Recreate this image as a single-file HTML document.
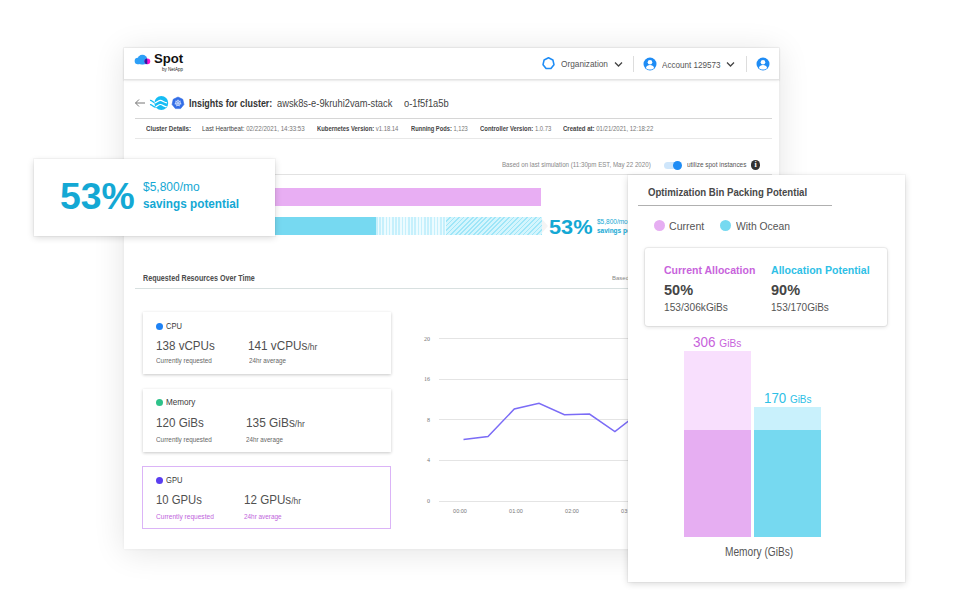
<!DOCTYPE html>
<html><head><meta charset="utf-8">
<style>
*{margin:0;padding:0;box-sizing:border-box}
html,body{width:960px;height:593px;overflow:hidden;background:#fff}
body{position:relative;font-family:"Liberation Sans",sans-serif;color:#333}
.a{position:absolute}
.t{position:absolute;white-space:nowrap;line-height:1}
.main{left:124px;top:48px;width:655px;height:501px;background:#fff;box-shadow:0 0 3px rgba(0,0,0,0.06),0 3px 30px rgba(0,0,0,0.11)}
.hdr{left:124px;top:48px;width:655px;height:32px;background:#fff;border-bottom:1px solid #e4e4e4;box-shadow:0 0 0 1px rgba(0,0,0,0.03),0 1px 3px rgba(0,0,0,0.06)}
.line{position:absolute;height:1px;background:#dcdcdc}
.card{position:absolute;background:#fff;box-shadow:0 1px 3px rgba(0,0,0,0.22)}
.ovl{position:absolute;background:#fff;box-shadow:0 0 0 1px rgba(0,0,0,0.03),0 1.5px 7px rgba(0,0,0,0.16)}
</style></head><body>

<!-- MAIN PANEL -->
<div class="a main"></div>
<div class="a hdr"></div>

<!-- logo -->
<svg class="a" style="left:130px;top:50px" width="24" height="18" viewBox="130 50 24 18">
  <defs><clipPath id="cc"><circle cx="142.4" cy="59.7" r="4.9"/><rect x="137" y="59.7" width="10.3" height="4.4"/></clipPath></defs>
  <g fill="#2d9ff7">
    <circle cx="137.9" cy="60.9" r="3.25"/>
    <circle cx="142.4" cy="59.7" r="4.9"/>
    <rect x="137.6" y="59.5" width="9.7" height="4.65"/>
  </g>
  <circle cx="147.4" cy="61.3" r="2.85" fill="#ff10cf"/>
  <circle cx="147.4" cy="61.3" r="2.85" fill="#2b1e9e" clip-path="url(#cc)"/>
</svg>
<div class="t" style="left:154px;top:53px;font-size:12.5px;font-weight:bold;color:#111;transform:scaleX(1.05);transform-origin:0 0">Spot</div>
<div class="t" style="left:162px;top:67.6px;font-size:4.5px;color:#222;transform:scaleX(1.0);transform-origin:0 0">by NetApp</div>

<!-- header right -->
<svg class="a" style="left:540px;top:55px" width="17" height="17" viewBox="540 55 17 17"><polygon points="548.50,57.80 552.88,59.91 553.96,64.65 550.93,68.45 546.07,68.45 543.04,64.65 544.12,59.91" fill="none" stroke="#1e8cf5" stroke-width="1.6" stroke-linejoin="round"/></svg>
<div class="t" style="left:561px;top:60px;font-size:9px;color:#555;transform:scaleX(0.92);transform-origin:0 0">Organization</div>
<svg class="a" style="left:614px;top:60px" width="9" height="8" viewBox="0 0 9 8"><path d="M1 2.5 L4.5 6 L8 2.5" fill="none" stroke="#444" stroke-width="1.3"/></svg>
<div class="a" style="left:633px;top:56px;width:1px;height:16px;background:#ddd"></div>
<svg class="a" style="left:643px;top:57px" width="14" height="14" viewBox="0 0 14 14">
  <circle cx="7" cy="7" r="6.5" fill="#1e8cf5"/>
  <circle cx="7" cy="5.2" r="2.3" fill="#fff"/>
  <path d="M2.9 11 C3.5 8.7 5 8 7 8 C9 8 10.5 8.7 11.1 11 C10 12.1 8.6 12.6 7 12.6 C5.4 12.6 4 12.1 2.9 11Z" fill="#fff"/>
</svg>
<div class="t" style="left:662px;top:60.5px;font-size:9px;color:#555;transform:scaleX(0.9);transform-origin:0 0">Account 129573</div>
<svg class="a" style="left:726px;top:60px" width="9" height="8" viewBox="0 0 9 8"><path d="M1 2.5 L4.5 6 L8 2.5" fill="none" stroke="#444" stroke-width="1.3"/></svg>
<div class="a" style="left:746px;top:56px;width:1px;height:16px;background:#ddd"></div>
<svg class="a" style="left:756px;top:57px" width="14" height="14" viewBox="0 0 14 14">
  <circle cx="7" cy="7" r="6.5" fill="#1e8cf5"/>
  <circle cx="7" cy="5.2" r="2.3" fill="#fff"/>
  <path d="M2.9 11 C3.5 8.7 5 8 7 8 C9 8 10.5 8.7 11.1 11 C10 12.1 8.6 12.6 7 12.6 C5.4 12.6 4 12.1 2.9 11Z" fill="#fff"/>
</svg>

<!-- insights row -->
<svg class="a" style="left:134px;top:98px" width="12" height="10" viewBox="0 0 12 10"><path d="M11 5 H1.5 M5 1.5 L1.5 5 L5 8.5" fill="none" stroke="#777" stroke-width="1"/></svg>
<svg class="a" style="left:148px;top:94px" width="22" height="18" viewBox="148 94 22 18">
  <defs><clipPath id="oc"><circle cx="161.3" cy="103" r="6.9"/></clipPath></defs>
  <path d="M150 100.4 C152 100 153 102.9 155 102.8 C157 102.6 158.5 100.1 160.5 100.3 C162.5 100.5 164.5 102.8 167 102.8 M150 104.6 C152 104.2 153 107.1 155 107 C157 106.8 158.5 104.3 160.5 104.5 C162.5 104.7 164.5 107 167 107" fill="none" stroke="#16bdf4" stroke-width="1.3"/>
  <circle cx="161.3" cy="103" r="6.9" fill="#16bdf4"/>
  <path d="M150 100.4 C152 100 153 102.9 155 102.8 C157 102.6 158.5 100.1 160.5 100.3 C162.5 100.5 164.5 102.8 167 102.8 M150 104.6 C152 104.2 153 107.1 155 107 C157 106.8 158.5 104.3 160.5 104.5 C162.5 104.7 164.5 107 167 107" fill="none" stroke="#fff" stroke-width="1.2" clip-path="url(#oc)"/>
</svg>
<svg class="a" style="left:171px;top:96px" width="14" height="14" viewBox="171 96 14 14">
  <polygon points="178.00,97.00 182.77,99.30 183.95,104.46 180.65,108.60 175.35,108.60 172.05,104.46 173.23,99.30" fill="#326de6" stroke="#326de6" stroke-width="0.6" stroke-linejoin="round"/>
  <circle cx="178" cy="103.1" r="2.4" fill="none" stroke="#e6eeff" stroke-width="0.8"/>
  <path d="M178.00 103.10 L178.00 99.50 M178.00 103.10 L180.81 100.86 M178.00 103.10 L181.51 103.90 M178.00 103.10 L179.56 106.34 M178.00 103.10 L176.44 106.34 M178.00 103.10 L174.49 103.90 M178.00 103.10 L175.19 100.86" stroke="#e6eeff" stroke-width="0.6"/>
</svg>
<div class="t" style="left:189px;top:98px;font-size:10.5px;font-weight:bold;color:#333;transform:scaleX(0.85);transform-origin:0 0">Insights for cluster:</div>
<div class="t" style="left:277px;top:98px;font-size:10.5px;color:#444;transform:scaleX(0.886);transform-origin:0 0">awsk8s-e-9kruhi2vam-stack</div>
<div class="t" style="left:404px;top:98px;font-size:10.5px;color:#444;transform:scaleX(0.89);transform-origin:0 0">o-1f5f1a5b</div>

<div class="line" style="left:135px;top:118px;width:637px;background:#d6d6d6"></div>
<div class="line" style="left:135px;top:138px;width:637px;background:#e8e8e8"></div>
<div class="t" style="left:146px;top:124.5px;font-size:7px;font-weight:bold;color:#444;transform:scaleX(0.877);transform-origin:0 0">Cluster Details:</div>
<div class="t" style="left:202px;top:124.5px;font-size:7px;color:#777;transform:scaleX(0.886);transform-origin:0 0"><span style="color:#444">Last Heartbeat:</span> 02/22/2021, 14:33:53</div>
<div class="t" style="left:317px;top:124.5px;font-size:7px;color:#777;transform:scaleX(0.84);transform-origin:0 0"><b style="color:#444">Kubernetes Version:</b> v1.18.14</div>
<div class="t" style="left:411px;top:124.5px;font-size:7px;color:#777;transform:scaleX(0.82);transform-origin:0 0"><b style="color:#444">Running Pods:</b> 1,123</div>
<div class="t" style="left:480px;top:124.5px;font-size:7px;color:#777;transform:scaleX(0.845);transform-origin:0 0"><b style="color:#444">Controller Version:</b> 1.0.73</div>
<div class="t" style="left:563px;top:124.5px;font-size:7px;color:#777;transform:scaleX(0.862);transform-origin:0 0"><b style="color:#444">Created at:</b> 01/21/2021, 12:18:22</div>

<!-- savings section -->
<div class="t" style="left:502px;top:161.5px;font-size:6.3px;color:#888;transform:scaleX(0.982);transform-origin:0 0">Based on last simulation (11:30pm EST, May 22 2020)</div>
<div class="a" style="left:664px;top:161.5px;width:17px;height:7px;border-radius:4px;background:#cfe6fb"></div>
<div class="a" style="left:673px;top:160.5px;width:9.4px;height:9.4px;border-radius:50%;background:#1e8cf5"></div>
<div class="t" style="left:687px;top:161px;font-size:7px;color:#555;transform:scaleX(0.92);transform-origin:0 0">utilize spot instances</div>
<div class="a" style="left:750.8px;top:160.3px;width:9.6px;height:9.6px;border-radius:50%;background:#333;color:#fff;font-family:'Liberation Serif',serif;font-size:8px;font-weight:bold;text-align:center;line-height:9.6px">i</div>
<div class="line" style="left:135px;top:174px;width:637px;background:#e2e2e2"></div>

<div class="a" style="left:150px;top:188px;width:391px;height:18px;background:#e8aef3"></div>
<div class="a" style="left:150px;top:217px;width:226px;height:18px;background:#76d9f1"></div>
<div class="a" style="left:376px;top:217px;width:70px;height:18px;background:repeating-linear-gradient(90deg,#c6f0fc 0 1.6px,#ecfbff 1.6px 3.2px)"></div>
<div class="a" style="left:446px;top:217px;width:96px;height:18px;background:repeating-linear-gradient(-45deg,#9fe6f8 0 1.2px,#d4f5fd 1.2px 3.2px)"></div>
<svg class="a" style="left:542px;top:219px" width="8" height="14" viewBox="0 0 8 14"><path d="M0 0 L6 7 L0 14Z" fill="#f4f4f4"/></svg>
<div class="t" style="left:549px;top:217px;font-size:20px;font-weight:bold;color:#14a8d4;transform:scaleX(1.087);transform-origin:0 0">53%</div>
<div class="t" style="left:597px;top:219px;font-size:6.5px;color:#14a8d4">$5,800/mo</div>
<div class="t" style="left:597px;top:228px;font-size:6.5px;font-weight:bold;color:#14a8d4">savings potential</div>

<!-- requested resources -->
<div class="t" style="left:143px;top:274px;font-size:8.5px;font-weight:bold;color:#4c4c4c;transform:scaleX(0.84);transform-origin:0 0">Requested Resources Over Time</div>
<div class="t" style="left:612px;top:275px;font-size:6px;color:#888">Based on last simulation</div>
<div class="line" style="left:135px;top:288px;width:637px;background:#d8e0e0"></div>

<!-- CPU card -->
<div class="card" style="left:143px;top:312px;width:248px;height:62px"></div>
<div class="a" style="left:156px;top:323px;width:7px;height:7px;border-radius:50%;background:#1e82f5"></div>
<div class="t" style="left:166px;top:322px;font-size:8.5px;color:#3a3a3a;transform:scaleX(0.89);transform-origin:0 0">CPU</div>
<div class="t" style="left:156px;top:340px;font-size:12.5px;color:#505050;transform:scaleX(0.93);transform-origin:0 0">138 vCPUs</div>
<div class="t" style="left:248px;top:340px;font-size:12.5px;color:#505050;transform:scaleX(0.94);transform-origin:0 0">141 vCPUs<span style="font-size:9px">/hr</span></div>
<div class="t" style="left:156px;top:358.3px;font-size:6.4px;color:#666;transform:scaleX(0.995);transform-origin:0 0">Currently requested</div>
<div class="t" style="left:249px;top:358.3px;font-size:6.4px;color:#666;transform:scaleX(0.98);transform-origin:0 0">24hr average</div>

<!-- Memory card -->
<div class="card" style="left:143px;top:389px;width:248px;height:63px"></div>
<div class="a" style="left:156px;top:399px;width:7px;height:7px;border-radius:50%;background:#2ec28a"></div>
<div class="t" style="left:166px;top:398px;font-size:8.5px;color:#3a3a3a;transform:scaleX(0.955);transform-origin:0 0">Memory</div>
<div class="t" style="left:156px;top:417px;font-size:12.5px;color:#505050;transform:scaleX(0.93);transform-origin:0 0">120 GiBs</div>
<div class="t" style="left:246px;top:417px;font-size:12.5px;color:#505050;transform:scaleX(0.95);transform-origin:0 0">135 GiBs<span style="font-size:9px">/hr</span></div>
<div class="t" style="left:156px;top:437.3px;font-size:6.4px;color:#666;transform:scaleX(0.995);transform-origin:0 0">Currently requested</div>
<div class="t" style="left:246px;top:437.3px;font-size:6.4px;color:#666;transform:scaleX(0.98);transform-origin:0 0">24hr average</div>

<!-- GPU card -->
<div class="a" style="left:142px;top:466px;width:249px;height:63px;border:1px solid #dbb4f7;background:#fff"></div>
<div class="a" style="left:156px;top:477px;width:7px;height:7px;border-radius:50%;background:#5a3ef0"></div>
<div class="t" style="left:166px;top:476px;font-size:8.5px;color:#3a3a3a;transform:scaleX(0.89);transform-origin:0 0">GPU</div>
<div class="t" style="left:156px;top:494px;font-size:12.5px;color:#505050;transform:scaleX(0.905);transform-origin:0 0">10 GPUs</div>
<div class="t" style="left:244px;top:494px;font-size:12.5px;color:#505050;transform:scaleX(0.93);transform-origin:0 0">12 GPUs<span style="font-size:9px">/hr</span></div>
<div class="t" style="left:156px;top:514.3px;font-size:6.4px;color:#c065dc;transform:scaleX(1.03);transform-origin:0 0">Currently requested</div>
<div class="t" style="left:244px;top:514.3px;font-size:6.4px;color:#c065dc;transform:scaleX(1.0);transform-origin:0 0">24hr average</div>

<!-- chart -->
<svg class="a" style="left:400px;top:320px" width="240" height="210" viewBox="400 320 240 210">
  <g stroke="#e4e4e4" stroke-width="1">
    <line x1="439" y1="338.5" x2="640" y2="338.5"/>
    <line x1="439" y1="379.5" x2="640" y2="379.5"/>
    <line x1="439" y1="419.5" x2="640" y2="419.5"/>
    <line x1="439" y1="460.5" x2="640" y2="460.5"/>
    <line x1="439" y1="501.5" x2="640" y2="501.5"/>
  </g>
  <g font-family="Liberation Serif" font-size="6" fill="#777" text-anchor="end">
    <text x="430" y="340.5">20</text>
    <text x="430" y="381">16</text>
    <text x="430" y="421.5">8</text>
    <text x="430" y="462">4</text>
    <text x="430" y="503">0</text>
  </g>
  <g font-family="Liberation Sans" font-size="5.5" fill="#777" text-anchor="middle">
    <text x="460" y="513">00:00</text>
    <text x="516" y="513">01:00</text>
    <text x="572" y="513">02:00</text>
    <text x="628" y="513">03:00</text>
  </g>
  <polyline points="463.5,439.5 488,436.5 514.3,409 539,403.3 564.4,414.7 589.5,414.1 614.9,431.6 640,412" fill="none" stroke="#7b6cf6" stroke-width="1.5"/>
</svg>

<!-- LEFT OVERLAY -->
<div class="ovl" style="left:34px;top:159px;width:241px;height:77px"></div>
<div class="t" style="left:60px;top:178px;font-size:37px;font-weight:bold;color:#14a8d4;transform:scaleX(1.01);transform-origin:0 0">53%</div>
<div class="t" style="left:143px;top:181px;font-size:12px;color:#14a8d4">$5,800/mo</div>
<div class="t" style="left:143px;top:198px;font-size:12.5px;font-weight:bold;color:#14a8d4;transform:scaleX(0.94);transform-origin:0 0">savings potential</div>

<!-- RIGHT OVERLAY -->
<div class="ovl" style="left:628px;top:175px;width:277px;height:407px"></div>
<div class="t" style="left:648px;top:187px;font-size:10.5px;font-weight:bold;color:#484848;transform:scaleX(0.915);transform-origin:0 0">Optimization Bin Packing Potential</div>
<div class="a" style="left:638px;top:205px;width:194px;height:1.2px;background:#b0b0b0"></div>
<div class="a" style="left:654px;top:220px;width:11px;height:11px;border-radius:50%;background:#e6aef2"></div>
<div class="t" style="left:669px;top:220.5px;font-size:11px;color:#555;transform:scaleX(0.96);transform-origin:0 0">Current</div>
<div class="a" style="left:720px;top:220px;width:11px;height:11px;border-radius:50%;background:#76d9f0"></div>
<div class="t" style="left:736px;top:220.5px;font-size:11px;color:#555;transform:scaleX(0.94);transform-origin:0 0">With Ocean</div>

<div class="card" style="left:645px;top:248px;width:242px;height:78px;border-radius:3px;box-shadow:0 0 0 1px rgba(0,0,0,0.05),0 1px 4px rgba(0,0,0,0.14)"></div>
<div class="t" style="left:664px;top:264.5px;font-size:11px;font-weight:bold;color:#c863dc;transform:scaleX(0.956);transform-origin:0 0">Current Allocation</div>
<div class="t" style="left:771px;top:264.5px;font-size:11px;font-weight:bold;color:#2ec0e6;transform:scaleX(0.96);transform-origin:0 0">Allocation Potential</div>
<div class="t" style="left:664px;top:282.5px;font-size:14.5px;font-weight:bold;color:#454545">50%</div>
<div class="t" style="left:771px;top:282.5px;font-size:14.5px;font-weight:bold;color:#454545">90%</div>
<div class="t" style="left:664px;top:301.5px;font-size:11.5px;color:#555;transform:scaleX(0.885);transform-origin:0 0">153/306kGiBs</div>
<div class="t" style="left:771px;top:301.5px;font-size:11.5px;color:#555;transform:scaleX(0.87);transform-origin:0 0">153/170GiBs</div>

<div class="t" style="left:693px;top:335px;font-size:14px;color:#c863dc;transform:scaleX(0.965);transform-origin:0 0">306 <span style="font-size:10.5px">GiBs</span></div>
<div class="t" style="left:764px;top:391px;font-size:14px;color:#2ec0e6;transform:scaleX(0.95);transform-origin:0 0">170 <span style="font-size:10.5px">GiBs</span></div>
<div class="a" style="left:683.5px;top:351px;width:67px;height:80px;background:#f8dffd"></div>
<div class="a" style="left:683.5px;top:430px;width:67px;height:107px;background:#e6aef2"></div>
<div class="a" style="left:754px;top:407px;width:67px;height:24px;background:#c9f1fc"></div>
<div class="a" style="left:754px;top:430px;width:67px;height:107px;background:#76d9f0"></div>
<div class="t" style="left:725px;top:546px;font-size:12px;color:#555;transform:scaleX(0.845);transform-origin:0 0">Memory (GiBs)</div>

</body></html>
